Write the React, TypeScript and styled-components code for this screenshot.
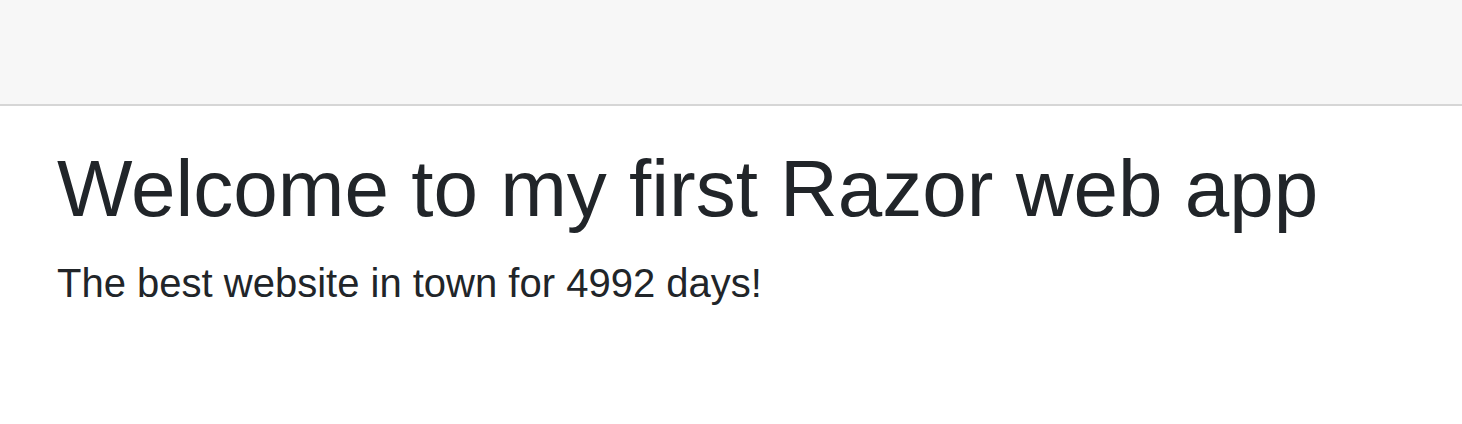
import React from "react";
import styled, { createGlobalStyle } from "styled-components";

const Global = createGlobalStyle`
  html, body { margin: 0; padding: 0; background: #ffffff; }
  body { font-family: "Liberation Sans", Arial, sans-serif; color: #212529; }
`;

const Header = styled.header`
  height: 104px;
  background: #f7f7f7;
  border-bottom: 2px solid #d6d6d6;
`;

const Main = styled.main`
  padding: 0 0 0 57px;
`;

const Title = styled.h1`
  margin: 0;
  padding-top: 35px;
  font-size: 80px;
  font-weight: 400;
  line-height: 96px;
  color: #212529;
`;

const Lead = styled.p`
  margin: 22px 0 0;
  font-size: 40px;
  line-height: 48px;
  color: #212529;
`;

export default function App() {
  return (
    <>
      <Global />
      <Header />
      <Main>
        <Title>Welcome to my first Razor web app</Title>
        <Lead>The best website in town for 4992 days!</Lead>
      </Main>
    </>
  );
}
